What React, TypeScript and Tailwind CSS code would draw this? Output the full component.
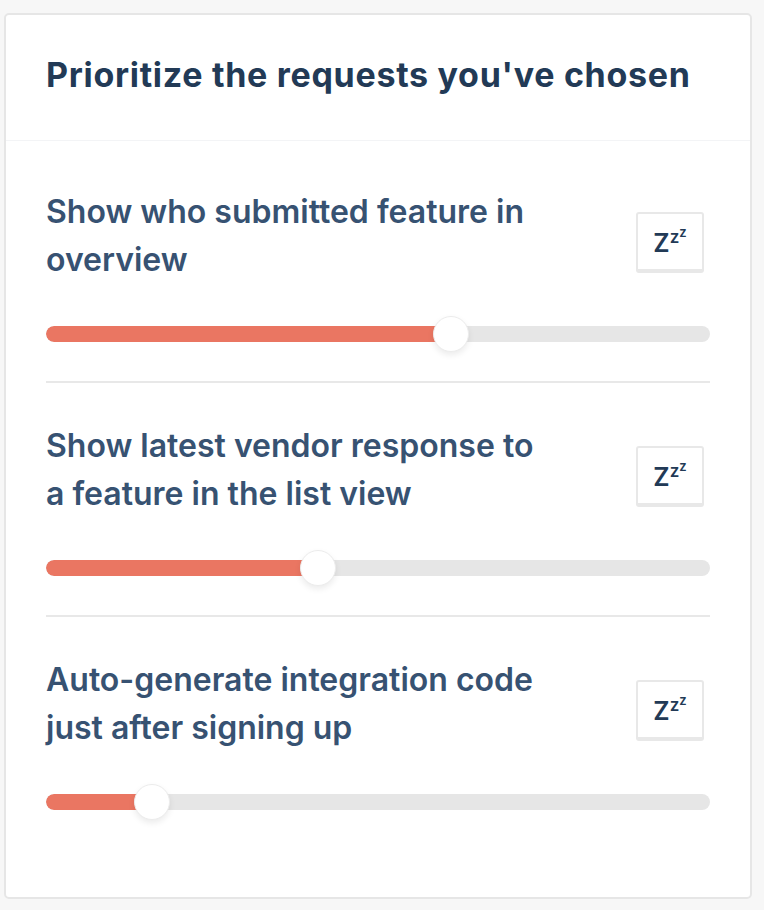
import React from 'react'

const REQUESTS = [
  { title: 'Show who submitted feature in overview', value: 61 },
  { title: 'Show latest vendor response to a feature in the list view', value: 41 },
  { title: 'Auto-generate integration code just after signing up', value: 16 },
]

export default function App() {
  return (
    <div
      className="min-h-[910px] bg-[#f7f7f7] pt-[13px] pl-[4px]"
      style={{ fontFamily: 'Inter, "Noto Sans", sans-serif' }}
    >
      <div className="w-[748px] h-[886px] rounded-[5px] border-2 border-[#e6e6e6] bg-white">
        {/* Header */}
        <div className="h-[126px] border-b border-[#f3f4f6] pl-[40px] pb-[6px] flex items-center">
          <h1 className="text-[34px] font-bold text-[#223a56] tracking-[0.7px]">
            Prioritize the requests you've chosen
          </h1>
        </div>

        {/* Rows */}
        <div className="px-[40px] pt-[47px]">
          {REQUESTS.map((r, i) => (
            <RequestRow key={r.title} title={r.title} value={r.value} last={i === REQUESTS.length - 1} />
          ))}
        </div>
      </div>
    </div>
  )
}

function RequestRow({ title, value, last }: { title: string; value: number; last: boolean }) {
  return (
    <div className={last ? 'pb-[40px]' : 'border-b-2 border-[#e8e8e8] pb-[29px] mb-[39px]'}>
      <div className="flex items-start justify-between">
        <h2 className="w-[500px] text-[32px] leading-[48px] font-semibold text-[#375272]">{title}</h2>
        <button className="mt-[24px] mr-[6px] w-[68px] h-[61px] rounded-[3px] border-2 border-b-4 border-[#e8e8e8] bg-white flex items-center justify-center text-[#223a56]">
          <span className="text-[25px] font-semibold leading-none mt-[4px]">Z</span>
          <span className="text-[17px] font-semibold leading-none -mt-[8px]">z</span>
          <span className="text-[13px] font-semibold leading-none -mt-[18px]">z</span>
        </button>
      </div>
      <div className="mt-[32px] relative h-[36px] flex items-center">
        <div className="w-full h-[16px] rounded-full bg-[#e6e6e6] overflow-hidden">
          <div className="h-full bg-[#ea7662] rounded-l-full" style={{ width: `${value}%` }} />
        </div>
        <div
          className="absolute top-0 w-[36px] h-[36px] -ml-[18px] rounded-full bg-white border border-[#ececec] shadow-[0_3px_6px_rgba(0,0,0,0.08)]"
          style={{ left: `${value}%` }}
        />
      </div>
    </div>
  )
}
